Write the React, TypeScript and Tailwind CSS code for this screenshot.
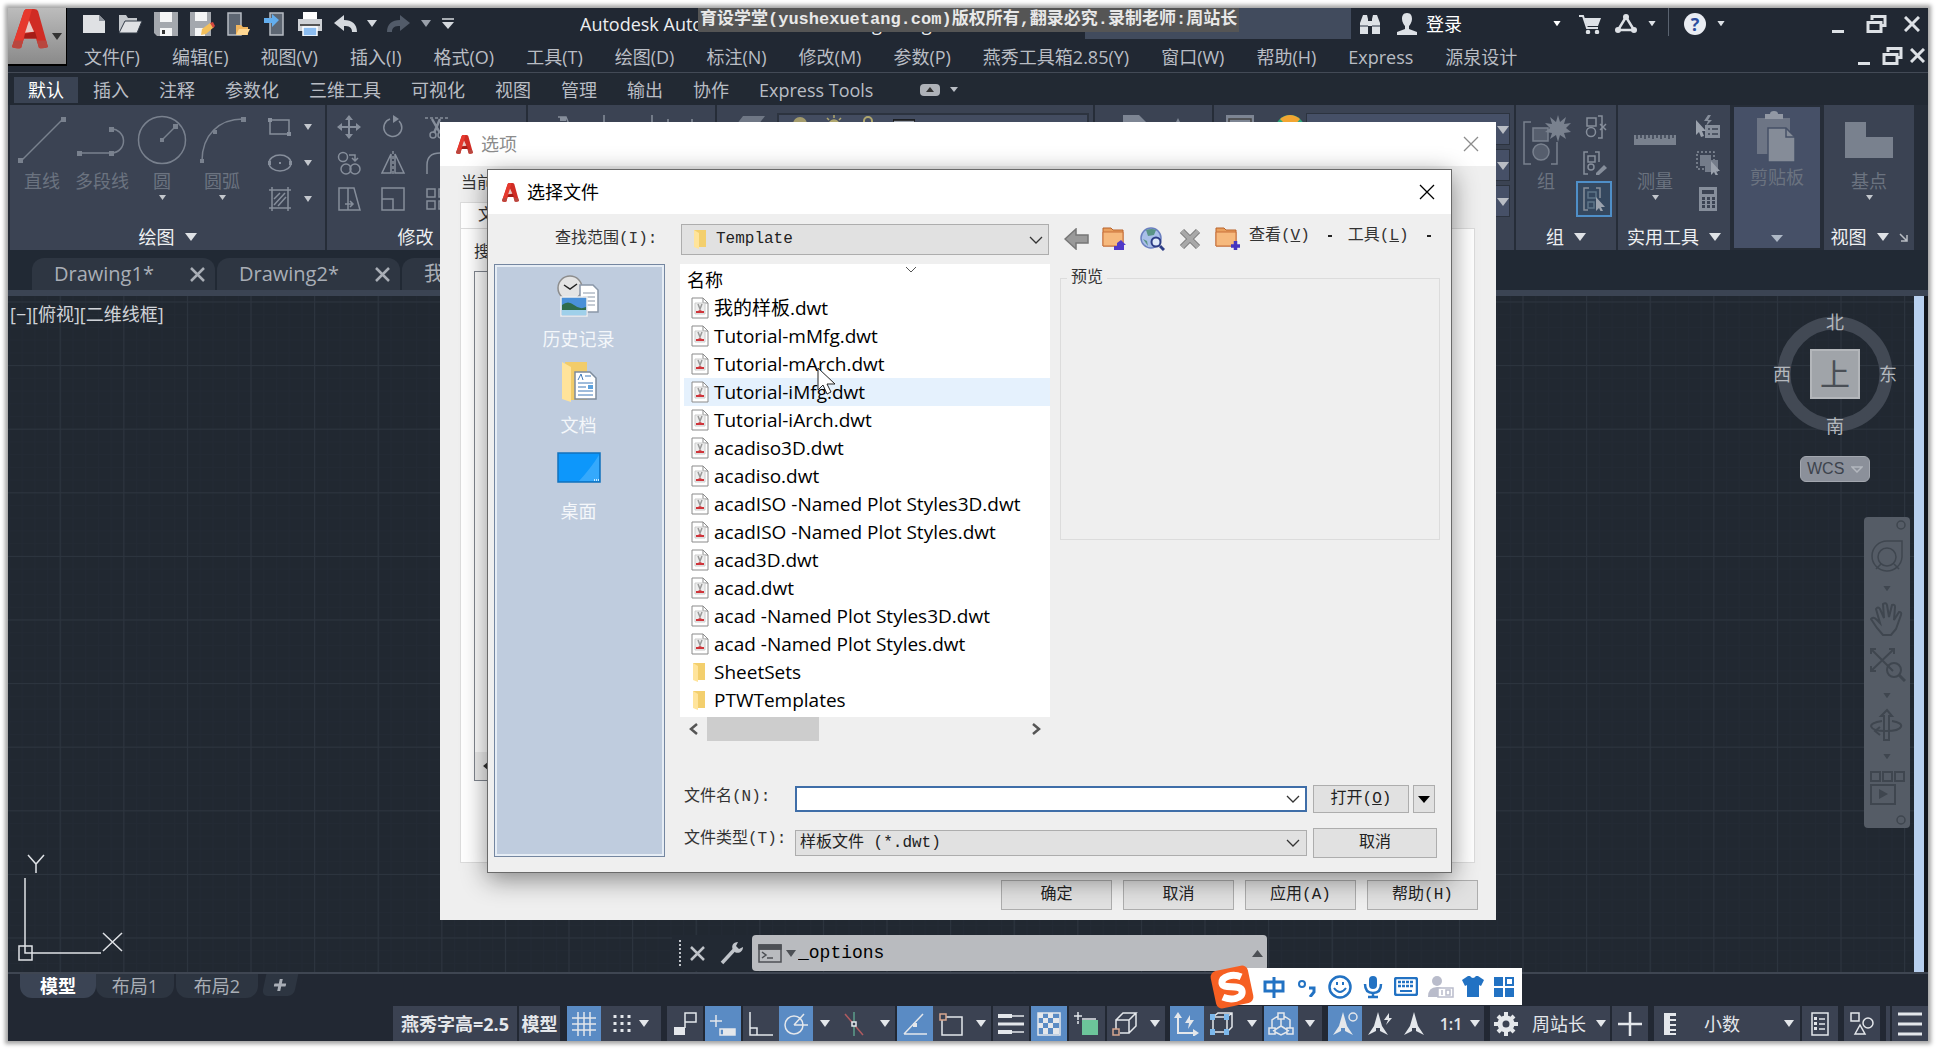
import type { ReactNode } from "react";

const MENUS = [
  "文件(F)", "编辑(E)", "视图(V)", "插入(I)", "格式(O)", "工具(T)", "绘图(D)", "标注(N)",
  "修改(M)", "参数(P)", "燕秀工具箱2.85(Y)", "窗口(W)", "帮助(H)", "Express", "源泉设计",
];

const TABS = ["默认", "插入", "注释", "参数化", "三维工具", "可视化", "视图", "管理", "输出", "协作", "Express Tools"];

const FILES = [
  "我的样板.dwt",
  "Tutorial-mMfg.dwt",
  "Tutorial-mArch.dwt",
  "Tutorial-iMfg.dwt",
  "Tutorial-iArch.dwt",
  "acadiso3D.dwt",
  "acadiso.dwt",
  "acadISO -Named Plot Styles3D.dwt",
  "acadISO -Named Plot Styles.dwt",
  "acad3D.dwt",
  "acad.dwt",
  "acad -Named Plot Styles3D.dwt",
  "acad -Named Plot Styles.dwt",
  "SheetSets",
  "PTWTemplates",
];

const HOVERED = "Tutorial-iMfg.dwt";

type IconProps = { w: number; h?: number; className?: string; children: ReactNode };

function Icon({ w, h = w, className = "", children }: IconProps) {
  return (
    <svg width={w} height={h} viewBox={`0 0 ${w} ${h}`} fill="none" stroke="currentColor" strokeWidth="1.5" className={`shrink-0 ${className}`} aria-hidden="true">
      {children}
    </svg>
  );
}

function Caret({ className = "" }: { className?: string }) {
  return (
    <Icon w={10} h={7} className={className}>
      <path d="M0 0h10L5 7z" fill="currentColor" stroke="none" />
    </Icon>
  );
}

function Chevron({ className = "" }: { className?: string }) {
  return (
    <Icon w={14} h={8} className={className}>
      <path d="M1 1l6 6 6-6" strokeWidth="1.3" />
    </Icon>
  );
}

function CloseX({ size = 16, thick = 1.3 }: { size?: number; thick?: number }) {
  return (
    <Icon w={size}>
      <path d={`M1 1L${size - 1} ${size - 1}M${size - 1} 1L1 ${size - 1}`} strokeWidth={thick} />
    </Icon>
  );
}

function LogoA({ w, h }: { w: number; h: number }) {
  return (
    <svg width={w} height={h} viewBox="0 0 36 42" preserveAspectRatio="none" className="shrink-0" aria-hidden="true">
      <path d="M12 2Q13 0 15 0h7q3 0 4 2l10 38q-5 2-9 1l-3-10H12L9 41q-5 1-9-1z" fill="#d02c24" />
      <path d="M12 2Q13 0 15 0h5L9 41q-5 1-9-1z" fill="#e6392e" />
      <path d="M17 12l5 12-9 1z" fill="#e9c9c4" />
      <path d="M13 26l10-2 2 7H12z" fill="#a51d17" />
      <path d="M2 33L0 40q4 2 9 1l2-8zM25 33l2 8q4 1 9-1l-2-7z" fill="#b8473f" />
    </svg>
  );
}

function ToolButton({ label, className = "", children }: { label: string; className?: string; children: ReactNode }) {
  return (
    <button aria-label={label} className={`flex items-center justify-center ${className}`}>
      {children}
    </button>
  );
}

function Restore() {
  return (
    <Icon w={21} h={18}>
      <path d="M6 5V1.5h13v9h-4M2 7.5h13v9H2z" strokeWidth="3" />
    </Icon>
  );
}

function QuickAccess() {
  return (
    <div className="ml-[9px] flex text-[#d5d9de]">
      <ToolButton label="新建" className="w-9">
        <Icon w={24} h={20}><path d="M1 1h16l6 6v12H1z" fill="#dfe1e4" stroke="none" /><path d="M17 1v6h6z" fill="#8d939c" stroke="none" /></Icon>
      </ToolButton>
      <ToolButton label="打开" className="w-9">
        <Icon w={25} h={20}><path d="M1 19V1h7l2 3h9v4" fill="#c3c7cc" stroke="none" /><path d="M7 7h17l-5 12H1z" fill="#dfe1e4" stroke="#333b47" strokeWidth="1" /></Icon>
      </ToolButton>
      <ToolButton label="保存" className="w-9">
        <Icon w={24}><path d="M0 0h24v24H3l-3-3z" fill="#a4a8ae" stroke="none" /><path d="M6 0h12v10H6zM6 16h12v8H6z" fill="#f4f5f6" stroke="none" /><path d="M8 18h3v4H8z" fill="#333" stroke="none" /></Icon>
      </ToolButton>
      <ToolButton label="另存为" className="w-9">
        <Icon w={25} h={24}><path d="M0 0h21v24H0z" fill="#a4a8ae" stroke="none" /><path d="M5 0h12v9H5zM5 16h10v8H5z" fill="#f4f5f6" stroke="none" /><path d="M11 23l1-6 8-6 4 4-8 7z" fill="#f3c05b" stroke="none" /><path d="M20 11l3-1 2 4-2 2z" fill="#d5483f" stroke="none" /></Icon>
      </ToolButton>
      <ToolButton label="从移动设备打开" className="w-9">
        <Icon w={23} h={24}><path d="M1 1h13v22H1z" fill="#5d6672" stroke="#b7bcc3" /><path d="M9 13h5l2 2h5v8H9z" fill="#f0b55e" stroke="none" /><path d="M12 17h11l-3 6H9z" fill="#ffd893" stroke="none" /></Icon>
      </ToolButton>
      <ToolButton label="保存到移动设备" className="w-9">
        <Icon w={23} h={24}><path d="M7 1h13v22H7z" fill="#5d6672" stroke="#b7bcc3" /><path d="M1 6h8V2l7 6-7 7v-4H1z" fill="#63aeee" stroke="none" /></Icon>
      </ToolButton>
      <ToolButton label="打印" className="w-9">
        <Icon w={24}><path d="M5 0h14v8H5z" fill="#fff" stroke="none" /><path d="M0 7h24v12H0z" fill="#cfd2d6" stroke="none" /><path d="M2 12h20v2H2z" fill="#555" stroke="none" /><path d="M5 15h14v9H5z" fill="#8cbdf0" stroke="#fff" /></Icon>
      </ToolButton>
      <ToolButton label="放弃" className="w-9">
        <Icon w={24} h={17}><path d="M0 8l10-8v5c8 0 13 4 13 12h-5c0-5-3-6-8-6v5z" fill="currentColor" stroke="none" /></Icon>
      </ToolButton>
      <ToolButton label="放弃列表" className="w-4"><Caret /></ToolButton>
      <ToolButton label="重做" className="w-9">
        <Icon w={24} h={17} className="text-[#525b69]"><path d="M24 8L14 0v5C6 5 1 9 1 17h5c0-5 3-6 8-6v5z" fill="currentColor" stroke="none" /></Icon>
      </ToolButton>
      <ToolButton label="重做列表" className="w-5"><Caret className="text-[#9aa0aa]" /></ToolButton>
      <ToolButton label="自定义快速访问工具栏" className="w-6">
        <Icon w={12} h={12}><path d="M0 1h12" /><path d="M0 4h12l-6 7z" fill="currentColor" stroke="none" /></Icon>
      </ToolButton>
    </div>
  );
}

function TitleArea() {
  return (
    <header className="flex h-[65px] border-b border-[#434a56] bg-[#212833]">
      <button aria-label="应用程序菜单" className="flex h-[58px] w-[59px] shrink-0 items-start gap-1 border-b-2 border-r border-black bg-linear-to-b from-[#bcbcbc] to-[#8a8a8a] pl-1 pt-px">
        <LogoA w={36} h={40} />
        <Caret className="mt-6 text-[#333]" />
      </button>
      <div className="flex min-w-0 flex-1 flex-col">
        <div className="flex h-[31px] items-stretch">
          <QuickAccess />
          <h1 className="ml-[120px] flex-1 self-center overflow-hidden whitespace-nowrap text-lg text-[#eceef0]">
            Autodesk AutoCAD 2020 — Drawing1.dwg
          </h1>
          <input aria-label="搜索" className="w-[266px] bg-[#414b5d] outline-none" />
          <div className="flex text-[#dde1e6]">
            <ToolButton label="查找" className="ml-px w-9">
              <Icon w={22} h={20}><path d="M1 20V9l3-8h4l1 4v15zM13 20V5l1-4h4l3 8v11zM9 7h4v5H9z" fill="currentColor" stroke="none" /><path d="M1 12h8M13 12h8" stroke="#666e7b" /></Icon>
            </ToolButton>
            <button className="flex w-[180px] items-center gap-2 pl-2 pr-[6px] text-lg text-white">
              <Icon w={22} className="text-[#dde1e6]"><path d="M11 0c4 0 5 3 5 6s-2 6-3 7v3l8 3v3H1v-3l8-3v-3C8 12 6 9 6 6s1-6 5-6z" fill="currentColor" stroke="none" /></Icon>
              <span className="flex-1 text-left">登录</span>
              <Caret className="scale-75" />
            </button>
            <ToolButton label="应用商店" className="ml-1 w-9">
              <Icon w={22} h={20}><path d="M0 2h4l4 12h11" strokeWidth="2" /><path d="M5 4h17l-3 8H8z" fill="currentColor" stroke="none" /><circle cx="9" cy="18" r="1.5" fill="currentColor" /><circle cx="18" cy="18" r="1.5" fill="currentColor" /></Icon>
            </ToolButton>
            <ToolButton label="保持连接" className="w-9">
              <Icon w={22} h={20}><path d="M11 3L3 16h16z" strokeWidth="2.5" /><circle cx="11" cy="3" r="3" fill="currentColor" stroke="none" /><circle cx="3" cy="16" r="3" fill="currentColor" stroke="none" /><circle cx="19" cy="16" r="3" fill="currentColor" stroke="none" /></Icon>
            </ToolButton>
            <ToolButton label="保持连接列表" className="w-4"><Caret className="scale-75" /></ToolButton>
            <span className="ml-2 h-7 w-px bg-[#5a6370]" />
            <ToolButton label="帮助" className="ml-2 w-9">
              <span className="flex size-[22px] items-center justify-center rounded-full bg-[#e9ecf2] text-lg font-bold text-[#2c4d9e]">?</span>
            </ToolButton>
            <ToolButton label="帮助列表" className="w-4"><Caret className="scale-75" /></ToolButton>
            <span className="w-[90px]" />
            <ToolButton label="最小化" className="w-[38px]"><span className="mt-4 h-[3px] w-3 bg-current" /></ToolButton>
            <ToolButton label="还原" className="w-[38px]"><Restore /></ToolButton>
            <ToolButton label="关闭" className="w-[33px]"><CloseX size={16} thick={3} /></ToolButton>
          </div>
        </div>
        <div className="flex flex-1 items-stretch text-[#dde1e6]">
          <nav className="flex flex-1 items-center gap-8 whitespace-nowrap pl-[17px] pt-[3px] text-lg text-[#b9bdc4]">
            {MENUS.map((m) => (
              <button key={m}>{m}</button>
            ))}
          </nav>
          <ToolButton label="最小化图形" className="w-7"><span className="mt-4 h-[3px] w-3 bg-current" /></ToolButton>
          <ToolButton label="还原图形" className="w-7"><Restore /></ToolButton>
          <ToolButton label="关闭图形" className="w-[22px]"><CloseX size={15} thick={3} /></ToolButton>
        </div>
      </div>
    </header>
  );
}

function RibbonTabs() {
  return (
    <div className="flex h-8 items-center bg-[#222933] pl-[6px] pt-px text-lg text-[#b9bdc4]">
      {TABS.map((t, i) => (
        <button key={t} className={i === 0 ? "h-[26px] bg-[#3a4353] px-[14px] leading-[26px] text-white" : "h-[26px] px-[15px] leading-[26px]"}>
          {t}
        </button>
      ))}
      <button aria-label="最小化功能区" className="ml-8 flex items-center gap-[10px]">
        <span className="flex h-3 w-5 items-center justify-center rounded-sm bg-[#aeb2b8] text-[#333]">
          <Icon w={8} h={5}><path d="M0 5h8L4 0z" fill="currentColor" stroke="none" /></Icon>
        </span>
        <Icon w={8} h={5}><path d="M0 0h8L4 5z" fill="currentColor" stroke="none" /></Icon>
      </button>
    </div>
  );
}

type PanelProps = { title: string; className: string; arrow?: boolean; corner?: boolean; children?: ReactNode };

function Panel({ title, className, arrow = true, corner, children }: PanelProps) {
  return (
    <section className={`flex flex-col bg-[#3b4353] ${className}`}>
      <div className="flex flex-1 pt-2">{children}</div>
      <div className="flex h-[26px] items-center justify-center gap-[10px] whitespace-nowrap text-lg text-[#eef0f2]">
        {title}
        {arrow && <Icon w={12} h={8} className="text-[#dfe2e6]"><path d="M0 0h12L6 8z" fill="currentColor" stroke="none" /></Icon>}
        {corner && <Corner />}
      </div>
    </section>
  );
}

function Corner() {
  return (
    <Icon w={9} className="text-[#b9bdc4]"><path d="M1 1l7 7M8 2v6H2" /></Icon>
  );
}

function BigTool({ label, className = "w-[60px]", arrow, children }: { label: string; className?: string; arrow?: boolean; children: ReactNode }) {
  return (
    <button className={`flex flex-col items-center text-[#79818e] ${className}`}>
      <span className="flex h-[54px] items-center">{children}</span>
      <span className="whitespace-nowrap text-lg leading-[28px] text-[#6b7380]">{label}</span>
      {arrow && <Icon w={7} h={5} className="text-[#c3c7cd]"><path d="M0 0h7L3.500 5z" fill="currentColor" stroke="none" /></Icon>}
    </button>
  );
}

const SMALL: Record<string, ReactNode> = {
  矩形: <><path d="M2 5h19v14H2z" /><path d="M0 3h4v4H0zM19 17h4v4h-4z" fill="currentColor" stroke="none" /></>,
  椭圆: <><ellipse cx="12" cy="12" rx="11" ry="8" /><path d="M11 11h2v2h-2zM0 10h3v4H0zM21 10h3v4h-3z" fill="currentColor" stroke="none" /></>,
  填充: <><path d="M1 3h22M1 21h22M4 0v24M20 0v24" /><path d="M6 12l6-6M6 18L17 6M10 19l8-9" /></>,
  移动: <><path d="M12 1v22M1 12h22" strokeWidth="2" /><path d="M12 0l4 5H8zM12 24l4-5H8zM0 12l5-4v8zM24 12l-5-4v8z" fill="currentColor" stroke="none" /></>,
  旋转: <><path d="M9 4a9 9 0 1 0 9 2" /><path d="M12 0l6 4-6 4z" fill="currentColor" stroke="none" /></>,
  修剪: <><path d="M0 3h24" strokeDasharray="3 2" /><path d="M7 4l8 14M15 4L9 18" strokeWidth="2.500" /><circle cx="8" cy="20" r="3" /><circle cx="16" cy="20" r="3" /></>,
  复制: <><circle cx="6" cy="6" r="4.500" /><circle cx="9" cy="18" r="5" /><circle cx="18" cy="18" r="5" /><path d="M12 4h6v5M15 7l3 3 3-3" /></>,
  镜像: <><path d="M10 3v19H1zM14 3v19h9z" /><path d="M12 0v24" strokeDasharray="3 2" /></>,
  圆角: <path d="M2 23V14Q2 2 15 2h8" />,
  拉伸: <><path d="M2 1h9v22H2zM11 1h6l6 22H11" /><path d="M8 17h8M13 14l3 3-3 3" /></>,
  缩放: <><path d="M1 1h22v22H1zM1 12h11v11" /></>,
  阵列: <path d="M2 2h8v8H2zM14 2h8v8h-8zM2 14h8v8H2zM14 14h8v8h-8z" />,
  解除编组: <><path d="M6 3h9v8H6zM17 1h4v22h-4M19 9l6 6M25 9l-6 6" /><circle cx="10" cy="17" r="4.500" /></>,
  组编辑: <><path d="M7 1H3v22h4M14 1h4v10M7 5h7v6H7z" /><circle cx="10" cy="16" r="3" /><path d="M15 22l8-8 3 3-8 7h-3z" fill="currentColor" stroke="none" /></>,
  组选择: <><path d="M8 1H3v22h4M15 1h4v10" /><path d="M7 5h8v6H7zM7 15h6v6H7z" stroke="#5d7488" /><path d="M15 10v14l3-3 2 4 2-1-2-4h4z" fill="#9ba2ad" stroke="none" /></>,
  快速选择: <><path d="M9 10h15v13H9z" fill="currentColor" stroke="none" /><path d="M12 14h2M16 14h6M12 19h2M16 19h6" stroke="#3b4353" /><path d="M0 5v15l3-3 2 5 3-1-2-5h4z" fill="#9ba2ad" stroke="none" /><path d="M12 0l-4 6h4l-2 5 6-6h-4l3-5z" fill="currentColor" stroke="none" /></>,
  全部选择: <><path d="M1 1h17v17H1z" strokeDasharray="2 2" /><path d="M4 4h11v11H4zM9 9h13v12H9z" fill="#747c8a" stroke="none" /><path d="M15 10v14l3-3 2 4 2-1-2-4h4z" fill="#9ba2ad" stroke="none" /></>,
  计算器: <><path d="M3 0h18v24H3z" fill="currentColor" stroke="none" /><path d="M6 3h12v4H6zM6 10h3v3H6zM11 10h3v3h-3zM16 10h3v3h-3zM6 14h3v3H6zM11 14h3v3h-3zM16 14h3v3h-3zM6 18h3v3H6zM11 18h3v3h-3zM16 18h3v3h-3z" fill="#3b4353" stroke="none" /></>,
};

function SmallTool({ name, arrow, active, className = "" }: { name: string; arrow?: boolean; active?: boolean; className?: string }) {
  return (
    <button aria-label={name} className={`flex h-9 items-center gap-[10px] text-[#868e9b] ${active ? "border-2 border-[#4f8fc8] bg-[#35485f]" : ""} ${className}`}>
      <Icon w={26} h={24}>{SMALL[name]}</Icon>
      {arrow && <Icon w={8} h={6} className="text-[#c3c7cd]"><path d="M0 0h8L4 6z" fill="currentColor" stroke="none" /></Icon>}
    </button>
  );
}

function PropertySelect({ label, value }: { label: string; value: string }) {
  return (
    <div className="relative h-8 border border-[#2c333f] bg-[#465067]">
      <select aria-label={label} className="h-full w-full appearance-none pl-4 text-lg text-[#9aa1ac] outline-none">
        <option>{value}</option>
      </select>
      <Icon w={12} h={8} className="pointer-events-none absolute right-0 top-3 text-[#b9bdc4]"><path d="M0 0h12L6 8z" fill="currentColor" stroke="none" /></Icon>
    </div>
  );
}

function Ribbon() {
  return (
    <div className="flex h-[145px] gap-[2px] bg-[#262d38] pl-[2px] pr-[14px]">
      <Panel title="绘图" className="w-[315px] shrink-0">
        <div className="flex pl-[2px]">
          <BigTool label="直线"><Icon w={50}><path d="M4 46L46 4" /><path d="M1 43h5v5H1zM44 2h5v5h-5z" fill="currentColor" stroke="none" /></Icon></BigTool>
          <BigTool label="多段线"><Icon w={50}><path d="M3 38h32a12 12 0 0 0-1-24" /><path d="M0 36h5v5H0zM32 36h5v5h-5zM32 12h5v5h-5z" fill="currentColor" stroke="none" /></Icon></BigTool>
          <BigTool label="圆" arrow><Icon w={50}><circle cx="25" cy="25" r="23.500" /><path d="M25 25l13-13" /><path d="M23 23h4v4h-4zM36 9h5v5h-5z" fill="currentColor" stroke="none" /></Icon></BigTool>
          <BigTool label="圆弧" arrow><Icon w={50}><path d="M5 46C5 20 22 4 46 4" /><path d="M3 44h4v4H3zM44 2h5v5h-5zM16 15h4v4h-4z" fill="currentColor" stroke="none" /></Icon></BigTool>
          <div className="ml-4 -mt-1 flex flex-col">
            <SmallTool name="矩形" arrow />
            <SmallTool name="椭圆" arrow />
            <SmallTool name="填充" arrow />
          </div>
        </div>
      </Panel>
      <Panel title="修改" className="w-[199px] shrink-0">
        <div className="-mt-1 grid auto-rows-[36px] grid-cols-3 gap-x-[18px] pl-[10px]">
          {["移动", "旋转", "修剪", "复制", "镜像", "圆角", "拉伸", "缩放", "阵列"].map((n) => (
            <SmallTool key={n} name={n} />
          ))}
        </div>
      </Panel>
      <Panel title="注释" className="w-[187px] shrink-0">
        <Icon w={180} h={30} className="text-[#868e9b]"><path d="M30 4h8l10 24M76 2v26M124 2v26M140 6v14M164 6v14" /><path d="M32 4h6v4h-6z" fill="currentColor" stroke="none" /></Icon>
      </Panel>
      <Panel title="图层" className="w-[376px] shrink-0">
        <Icon w={60} h={40} className="text-[#6f7785]"><path d="M26 3h22L38 16H16zM16 20h22v4H16z" fill="currentColor" stroke="none" /></Icon>
        <div className="mr-1 flex h-8 flex-1 items-start gap-4 border-2 border-[#2c333f] bg-[#434c60] pl-3">
          <Icon w={18}><circle cx="9" cy="9" r="7" fill="#a39b6c" stroke="none" /></Icon>
          <Icon w={18} className="text-[#b0a76f]"><circle cx="9" cy="10" r="5" fill="currentColor" /><path d="M9 0v3M2 3l2 2M16 3l-2 2" /></Icon>
          <Icon w={18} className="text-[#b0a76f]"><path d="M5 12V6a4 4 0 0 1 8 0v6M3 12h12v5H3z" strokeWidth="2" /></Icon>
          <Icon w={22} h={18}><path d="M0 5h22v11H0z" fill="#9ba2ad" stroke="#111" /></Icon>
        </div>
      </Panel>
      <Panel title="块" className="w-[117px] shrink-0">
        <Icon w={100} h={40} className="text-[#7d8593]"><path d="M28 2h16l10 10v26H28z" fill="currentColor" stroke="none" /><path d="M83 5l3 6 6-2-3 6 4 4H73l4-4-3-6 6 2z" fill="currentColor" stroke="none" /></Icon>
      </Panel>
      <Panel title="特性" className="min-w-0 flex-1" corner>
        <Icon w={92} h={48} className="text-[#9aa0aa]"><path d="M12 2h28v30H12z" fill="#7d8593" stroke="none" /><path d="M15 6h22v20H15z" stroke="#444" /><circle cx="76" cy="17" r="15" fill="#2fa87c" stroke="none" /><path d="M66 6q10-8 20 0l-9 11z" fill="#f2a531" stroke="none" /></Icon>
        <div className="flex flex-1 flex-col gap-1 pr-1">
          <PropertySelect label="颜色" value="ByLayer" />
          <PropertySelect label="线宽" value="ByLayer" />
          <PropertySelect label="线型" value="ByLayer" />
        </div>
      </Panel>
      <Panel title="组" className="w-[100px] shrink-0">
        <BigTool label="组" className="w-[60px]">
          <Icon w={50}><path d="M10 7H3v42h7M30 49h6V27" /><path d="M12 13h15v13H12z" fill="#565e6d" /><circle cx="20" cy="37" r="8" fill="#565e6d" /><path d="M37 0l2 7 6-5-2 7 7-1-5 5 5 4-7 1 2 6-6-4-2 7-2-7-6 4 2-6-7-1 5-4-5-5 7 1-2-7 6 5z" fill="currentColor" stroke="none" /></Icon>
        </BigTool>
        <div className="-mt-1 flex flex-col">
          <SmallTool name="解除编组" className="w-9 justify-center" />
          <SmallTool name="组编辑" className="w-9 justify-center" />
          <SmallTool name="组选择" active className="w-9 justify-center" />
        </div>
      </Panel>
      <Panel title="实用工具" className="w-[112px] shrink-0">
        <BigTool label="测量" arrow className="w-[74px]">
          <Icon w={42} h={12}><path d="M0 1h42v10H0z" fill="currentColor" stroke="none" /><path d="M3 1v4M7 1v3M11 1v4M15 1v3M19 1v4M23 1v3M27 1v4M31 1v3M35 1v4M39 1v3" stroke="#3b4353" /></Icon>
        </BigTool>
        <div className="-mt-1 flex flex-col pl-1">
          <SmallTool name="快速选择" />
          <SmallTool name="全部选择" />
          <SmallTool name="计算器" />
        </div>
      </Panel>
      <div className="mx-[2px] my-[2px] flex w-[86px] shrink-0 flex-col items-center bg-[#465067] text-[#6b7380]">
        <Icon w={42} h={52} className="mt-1"><path d="M1 7h33v36H1z" fill="#6d7585" stroke="none" /><path d="M9 3h5a4 3 0 0 1 8 0h5v5H9z" fill="#9298a4" stroke="none" /><path d="M12 17h18l9 9v25H12z" fill="#858c98" stroke="#465067" /><path d="M30 17v9h9" stroke="#465067" /></Icon>
        <span className="text-lg leading-[28px]">剪贴板</span>
        <Icon w={12} h={7} className="mb-[6px] mt-auto text-[#aeb8c6]"><path d="M0 0h12L6 7z" fill="currentColor" stroke="none" /></Icon>
      </div>
      <Panel title="视图" className="w-[90px] shrink-0" corner>
        <BigTool label="基点" arrow className="w-full">
          <Icon w={48} h={36}><path d="M0 0h21v15h27v21H0z" fill="currentColor" stroke="none" /></Icon>
        </BigTool>
      </Panel>
    </div>
  );
}

function FileTabs() {
  return (
    <div className="flex h-[46px] items-end border-b-[6px] border-[#3b4453] bg-[#212934] pl-6 text-xl text-[#a9aeb6]">
      {["Drawing1*", "Drawing2*", "我的样板*"].map((t) => (
        <div key={t} className="mr-[2px] flex h-8 w-[183px] items-center justify-between rounded-t-xl bg-[#2e3642] pl-[22px] pr-[10px]">
          <span>{t}</span>
          <ToolButton label={`关闭 ${t}`}><CloseX size={15} thick={2.5} /></ToolButton>
        </div>
      ))}
    </div>
  );
}

function ViewCube() {
  return (
    <div className="absolute right-[7px] top-5 flex w-[144px] flex-col items-center text-lg text-[#b4b8be]">
      <div className="relative flex h-[116px] w-[116px] items-center justify-center">
        <Icon w={116} className="absolute left-0 top-0 text-[#424954]"><circle cx="58" cy="58" r="51" strokeWidth="13" /></Icon>
        <div className="absolute inset-0 flex flex-col items-center justify-between">
          <span className="-mt-1 leading-5">北</span>
          <span className="-mb-1 leading-5">南</span>
        </div>
        <div className="absolute -inset-x-1 inset-y-0 flex items-center justify-between">
          <span>西</span>
          <span>东</span>
        </div>
        <button className="relative size-[50px] border-2 border-[#b3b6ba] bg-[#a0a4a9] text-3xl text-[#4a4f56]">上</button>
      </div>
      <button className="mt-6 flex h-[26px] w-[70px] items-center justify-between rounded-md border border-[#a3a7af] bg-[#8b909a] px-[6px] font-[Liberation_Sans] text-base text-[#3d434d]">
        WCS
        <Icon w={12} h={7} className="text-[#b3b7be]"><path d="M1 1h10L6 6z" /></Icon>
      </button>
    </div>
  );
}

function NavBar() {
  return (
    <div className="absolute right-1 top-[221px] flex h-[311px] w-[46px] flex-col items-center justify-between rounded-sm bg-[#555c66] py-[3px] text-[#3f464f]">
      <Icon w={10} className="mr-1 self-end"><circle cx="5" cy="5" r="4" /></Icon>
      <ToolButton label="控制盘"><Icon w={36}><path d="M18 2h15v16a15 15 0 1 1-15-16z" /><circle cx="18" cy="18" r="9" /><path d="M12 25l-5 5M25 25l5 5" /></Icon></ToolButton>
      <Caret className="scale-75" />
      <ToolButton label="平移"><Icon w={36}><path d="M8 27L2 18q2-3 6 1l3 3-4-14q2-3 4 0l4 9-1-14q3-2 4 1l2 12 3-12q3-1 3 2l-1 13 5-8q3 0 2 3l-5 14-5 6H14z" strokeWidth="2" /></Icon></ToolButton>
      <ToolButton label="缩放"><Icon w={38} h={36}><path d="M3 3l22 22M26 3L3 25M3 8V3h5M21 3h5v5M3 20v5h5" strokeWidth="2" /><circle cx="26" cy="24" r="7" strokeWidth="2" /><path d="M31 29l6 6" strokeWidth="3" /></Icon></ToolButton>
      <Caret className="scale-75" />
      <ToolButton label="动态观察"><Icon w={36}><path d="M15 32V8h-3l6-6 5 6h-3v24z" strokeWidth="2" /><path d="M13 13c-16 2-14 10 4 10s20-8 6-10M11 19l-5 4 5 4" strokeWidth="2" /></Icon></ToolButton>
      <Caret className="scale-75" />
      <ToolButton label="ShowMotion"><Icon w={36}><path d="M2 2h9v9H2zM14 2h9v9h-9zM26 2h9v9h-9zM2 15h24v19H2z" strokeWidth="2" /><path d="M10 19v10l9-5z" fill="currentColor" stroke="none" /></Icon></ToolButton>
      <Icon w={10} className="mr-1 self-end"><circle cx="5" cy="5" r="4" /></Icon>
    </div>
  );
}

function DrawingArea() {
  return (
    <main className="relative flex flex-1 bg-[#212831]">
      <div className="relative flex flex-1 flex-col">
        <svg className="absolute inset-0 h-full w-full" aria-hidden="true">
          <defs>
            <pattern id="minor" width="12.720" height="12.720" patternUnits="userSpaceOnUse" x="51.700" y="5.500">
              <path d="M0 .5h13M.5 0v13" stroke="#232a34" fill="none" />
            </pattern>
            <pattern id="major" width="63.600" height="63.600" patternUnits="userSpaceOnUse" x="51.700" y="5.500">
              <path d="M0 .5h64M.5 0v64" stroke="#2d353f" fill="none" />
            </pattern>
          </defs>
          <rect width="100%" height="100%" fill="url(#minor)" />
          <rect width="100%" height="100%" fill="url(#major)" />
        </svg>
        <p className="relative pl-[2px] pt-1 text-lg text-[#d0d3d8]">[−][俯视][二维线框]</p>
        <Icon w={116} h={110} className="relative ml-[10px] mt-auto mb-2 text-[#dfe2e6]">
          <path d="M7 24v75h76M1 92h13v14H1z" />
          <path d="M10 1l8 9 8-9M18 10v9M85 79l19 18M104 79L85 97" />
        </Icon>
        <ViewCube />
        <div className="absolute bottom-px left-[664px] flex h-9 items-center bg-[#222933] text-[#c0c4ca]">
          <Icon w={10} h={26} className="ml-1"><path d="M4 0v26" strokeDasharray="2 2" strokeWidth="2" /></Icon>
          <ToolButton label="关闭命令行" className="ml-1"><CloseX size={15} thick={2.5} /></ToolButton>
          <ToolButton label="自定义" className="ml-[15px]">
            <Icon w={24}><path d="M2 22L14 9" strokeWidth="3.500" /><path d="M23 6l-4 2-3-3 2-4c-5 0-7 4-5 8 3 5 10 3 10-3z" fill="currentColor" stroke="none" /></Icon>
          </ToolButton>
          <div className="ml-2 flex h-9 w-[515px] items-center rounded-sm bg-[#b9bbbf] pl-[6px] pr-1 text-[#4d5055]">
            <Icon w={24} h={19}><path d="M1 1h22v17H1zM1 5h22M4 8l4 3-4 3M9 14h6" /><path d="M1 1h22v4H1z" fill="currentColor" /></Icon>
            <Caret className="ml-1" />
            <input aria-label="命令" defaultValue="_options" className="min-w-0 flex-1 pl-[2px] font-[Liberation_Mono,Noto_Sans_CJK_SC,monospace] text-lg text-black outline-none" />
            <Icon w={11} h={7}><path d="M0 7h11L5.500 0z" fill="currentColor" stroke="none" /></Icon>
          </div>
        </div>
        <NavBar />
      </div>
      <div className="w-[10px] bg-[#b8d0ef]" />
      <div className="w-1 bg-[#12161c]" />
    </main>
  );
}

function LayoutTabs() {
  return (
    <div className="flex h-[34px] items-start border-t-2 border-[#3f4652] pl-3 text-lg leading-[24px] text-[#a9aeb6]">
      <button className="h-6 w-[76px] rounded-b-xl bg-[#3b4454] font-bold text-white">模型</button>
      <button className="h-6 w-[78px] rounded-b-xl bg-[#2d3541]">布局1</button>
      <button className="ml-[2px] h-6 w-[82px] rounded-b-xl bg-[#2d3541]">布局2</button>
      <button aria-label="新建布局" className="ml-[6px] flex h-[22px] w-8 -skew-x-12 items-center justify-center rounded-b-md bg-[#2d3541]">
        <Icon w={12}><path d="M6 0v12M0 6h12" strokeWidth="3" /></Icon>
      </button>
    </div>
  );
}

function StatusButton({ label, on, bare, className = "w-9", children }: { label: string; on?: boolean; bare?: boolean; className?: string; children: ReactNode }) {
  return (
    <button aria-label={label} className={`flex h-full shrink-0 items-center justify-center gap-2 whitespace-nowrap ${on ? "bg-[#5a8bc4]" : "bg-[#3b4252]"} ${bare ? "" : "ml-[2px]"} ${className}`}>
      {children}
    </button>
  );
}

function StatusBar() {
  return (
    <footer className="flex h-[35px] items-stretch justify-end text-lg text-[#e4e7eb]">
      <StatusButton label="燕秀字高" className="w-[124px] font-bold">燕秀字高=2.5</StatusButton>
      <StatusButton label="模型空间" className="ml-2 w-[41px] font-bold">模型</StatusButton>
      <StatusButton label="栅格" on className="ml-[7px] w-[34px]"><Icon w={24}><path d="M0 6h24M0 12h24M0 18h24M6 0v24M12 0v24M18 0v24" /></Icon></StatusButton>
      <StatusButton label="捕捉模式" bare className="w-[60px] justify-between pl-2 pr-[9px]">
        <Icon w={18}><path d="M2 0v18M9 0v18M16 0v18" strokeWidth="3" strokeDasharray="3 4" /></Icon>
        <Caret />
      </StatusButton>
      <StatusButton label="推断约束" className="ml-[6px] w-9"><Icon w={24}><path d="M12 10V1h11v9H12v6" /><path d="M1 15h11v8H1z" fill="currentColor" stroke="none" /></Icon></StatusButton>
      <StatusButton label="动态输入" on><Icon w={26} h={24}><path d="M0 9h12M6 3v12M10 17h15v6H10z" /><path d="M13 17h12v6H13z" fill="currentColor" stroke="none" /></Icon></StatusButton>
      <StatusButton label="正交"><Icon w={24}><path d="M1 0v23h23M1 16h7v7" /></Icon></StatusButton>
      <StatusButton label="极轴追踪" on bare className="w-[34px]"><Icon w={26} h={24}><circle cx="11" cy="13" r="9" /><path d="M11 13h14M11 13L21 2" /></Icon></StatusButton>
      <StatusButton label="极轴列表" bare className="w-6"><Caret /></StatusButton>
      <StatusButton label="等轴测草图" bare className="w-[58px] gap-3"><Icon w={26} h={24}><path d="M3 2l18 21" stroke="#b05b60" /><path d="M12 0v24" stroke="#5d9e8b" /><path d="M10 10h4v4h-4z" fill="#3b4252" /></Icon><Caret /></StatusButton>
      <StatusButton label="对象捕捉追踪" on><Icon w={24}><path d="M1 22h23M1 22L20 2" /><path d="M10 11h4v4h-4z" fill="currentColor" stroke="none" /></Icon></StatusButton>
      <StatusButton label="对象捕捉" bare className="w-[58px] gap-3"><Icon w={25} h={24}><path d="M3 5h20v18H3z" /><path d="M1 2h6v6H1z" fill="#3b4252" stroke="#d8a68e" /></Icon><Caret /></StatusButton>
      <StatusButton label="线宽"><Icon w={26} h={24}><path d="M0 4h26" /><path d="M0 12h26" strokeWidth="3" /><path d="M0 20h26" /><path d="M0 4h14M0 20h14" strokeWidth="4" /></Icon></StatusButton>
      <StatusButton label="透明度" on>
        <Icon w={24}><path d="M1 1h22v22H1z" /><path d="M1 1h5v5H1zM11 1h5v5h-5zM6 6h5v5H6zM16 6h6v5h-6zM1 11h5v5H1zM11 11h5v5h-5zM6 16h5v6H6zM16 16h6v6h-6z" fill="currentColor" stroke="none" /></Icon>
      </StatusButton>
      <StatusButton label="选择循环"><Icon w={26} h={24}><path d="M8 8h16v15H8z" fill="#6cc59a" stroke="none" /><path d="M0 4h8M4 0v8M4 12v-3M8 7h14" /></Icon></StatusButton>
      <StatusButton label="三维对象捕捉" className="w-[58px] gap-3"><Icon w={26} h={24}><path d="M4 18V8h13v13H8M4 8l7-7h13l-7 7M24 1v13l-7 7" /><path d="M1 17h6v6H1z" fill="#3b4252" stroke="#d8a68e" /></Icon><Caret /></StatusButton>
      <StatusButton label="动态 UCS" on className="ml-[5px] w-[34px]"><Icon w={26} h={24}><path d="M4 4v17h18" strokeWidth="2" /><path d="M4 0l4 6H0zM25 21l-6-4v8z" fill="currentColor" stroke="none" /><path d="M16 3l-5 8h4l-1 6 6-9h-4z" fill="currentColor" stroke="none" /></Icon></StatusButton>
      <StatusButton label="选择过滤" bare className="w-[58px] gap-3"><Icon w={26} h={24}><path d="M4 5h14v15H4zM4 5l5-4h14v14l-5 5M18 5l5-4" /><path d="M1 2h5v6H1zM15 2h5v6h-5zM1 17h5v6H1zM15 17h5v6h-5z" fill="#7cb8ec" stroke="none" /></Icon><Caret /></StatusButton>
      <StatusButton label="小控件" on className="w-[34px]"><Icon w={26} h={24}><path d="M10 1h6v6h-6zM13 7v7l-8 5M13 14l8 5M1 16h6v6H1zM19 16h6v6h-6zM10 4l-6 4v8M16 4l6 4v8M7 20l6 3 6-3" /></Icon></StatusButton>
      <StatusButton label="小控件列表" bare className="w-6"><Caret /></StatusButton>
      <StatusButton label="注释可见性" on className="ml-[6px] w-[34px]"><Icon w={26} h={24}><path d="M11 0l4 14 6 9-8-4v-3h-4v3l-8 4 6-9z" fill="currentColor" stroke="none" /><circle cx="21" cy="5" r="4" /></Icon></StatusButton>
      <StatusButton label="自动缩放" bare><Icon w={26} h={24}><path d="M11 0l4 14 6 9-8-4v-3h-4v3l-8 4 6-9zM22 1l-5 7h4l-2 5 6-7h-3z" fill="currentColor" stroke="none" /></Icon></StatusButton>
      <StatusButton label="注释比例" bare className="w-[86px]"><Icon w={26} h={24}><path d="M12 0l4 14 6 9-8-4v-3h-4v3l-8 4 6-9z" fill="currentColor" stroke="none" /></Icon><span className="ml-1 text-base font-semibold">1:1</span><Caret /></StatusButton>
      <StatusButton label="切换工作空间" className="ml-[6px] w-[120px] gap-[10px]">
        <Icon w={24}><circle cx="12" cy="12" r="6" strokeWidth="5" /><path d="M12 0v5M12 19v5M0 12h5M19 12h5M4 4l3 3M17 17l3 3M20 4l-3 3M7 17l-3 3" strokeWidth="4" /></Icon>
        <span className="ml-1">周站长</span>
        <Caret />
      </StatusButton>
      <StatusButton label="注释监视器"><Icon w={24}><path d="M12 0v24M0 12h24" strokeWidth="2.500" /></Icon></StatusButton>
      <StatusButton label="单位" className="ml-[6px] w-[146px] gap-0 pl-[10px] pr-[6px]">
        <Icon w={12} h={22}><path d="M0 0h12v3H6v3h6v2H6v3h6v2H6v3h6v2H6v2h6v2H0z" fill="currentColor" stroke="none" /></Icon>
        <span className="ml-5 flex-1 text-left">小数</span>
        <Caret />
      </StatusButton>
      <StatusButton label="快捷特性"><Icon w={18} h={24}><path d="M1 1h16v22H1zM8 7h6M8 12h6M8 17h6" /><path d="M3 5h3v3H3zM3 10h3v3H3zM3 15h3v3H3z" fill="currentColor" stroke="none" /></Icon></StatusButton>
      <StatusButton label="隔离对象" className="ml-[6px] w-9"><Icon w={24}><path d="M1 1h8v8H1zM5 22l5-9 5 9z" /><circle cx="18" cy="11" r="5" /></Icon></StatusButton>
      <StatusButton label="分隔" className="ml-[6px] w-1">{null}</StatusButton>
      <StatusButton label="自定义状态栏" className="ml-1 w-9"><Icon w={24}><path d="M0 2h24M0 12h24M0 22h24" strokeWidth="3" /></Icon></StatusButton>
    </footer>
  );
}

function ImeBar() {
  return (
    <div className="absolute left-[1233px] top-[968px] flex h-[37px] items-center bg-white pl-6 text-[#2272c3]">
      <div className="absolute -left-5 top-0 flex size-[38px] -rotate-12 items-center justify-center rounded-md bg-[#f65f22]">
        <Icon w={32}><path d="M27 8C20 3 8 3 7 10s18 4 18 12-13 7-20 2" stroke="#fff" strokeWidth="7" /></Icon>
      </div>
      <ToolButton label="中文" className="w-[33px]"><Icon w={22}><path d="M2 6h18v9H2zM11 1v21" strokeWidth="3" /></Icon></ToolButton>
      <ToolButton label="标点" className="w-[33px]"><Icon w={20}><circle cx="5" cy="7" r="3" strokeWidth="2" /><path d="M12 11h5v4l-4 5" strokeWidth="3" /></Icon></ToolButton>
      <ToolButton label="表情" className="w-[33px]"><Icon w={24}><circle cx="12" cy="12" r="10.500" strokeWidth="2.500" /><path d="M6 13q6 8 12 0M9 7v3M15 7v3" strokeWidth="2" /></Icon></ToolButton>
      <ToolButton label="语音" className="w-[33px]"><Icon w={20} h={24}><rect x="6" y="1" width="8" height="13" rx="4" fill="currentColor" stroke="none" /><path d="M2 9q0 9 8 9t8-9M10 18v5M5 22h10" strokeWidth="2.500" /></Icon></ToolButton>
      <ToolButton label="键盘" className="w-[33px]"><Icon w={24} h={19}><rect x="1" y="1" width="22" height="17" rx="2" strokeWidth="2.500" /><path d="M4 5h16M4 9h16" strokeWidth="2.500" strokeDasharray="3 1" /><path d="M6 14h12" strokeWidth="2" /></Icon></ToolButton>
      <ToolButton label="用户" className="w-[38px]">
        <Icon w={26} h={22} className="text-[#b9bccb]"><circle cx="9" cy="5" r="5" fill="currentColor" stroke="none" /><path d="M0 21q0-10 9-10 5 0 7 3v7z" fill="currentColor" stroke="none" /><path d="M10 12h15v9H10z" fill="#fff" /><path d="M14 14v5M18 14h4v5h-4z" /></Icon>
      </ToolButton>
      <ToolButton label="皮肤" className="w-[26px]"><Icon w={22} h={21}><path d="M6 0h2q3 4 6 0h2l6 4-3 6-2-1v12H5V9l-2 1-3-6z" fill="currentColor" stroke="none" /></Icon></ToolButton>
      <ToolButton label="工具箱" className="w-9"><Icon w={20}><path d="M0 0h9v9H0zM0 11h9v9H0zM11 11h9v9h-9z" fill="currentColor" stroke="none" /><path d="M12 1h7v7h-7z" strokeWidth="2" /></Icon></ToolButton>
    </div>
  );
}

function Folder({ w = 16, h = 20 }: { w?: number; h?: number }) {
  return (
    <svg width={w} height={h} viewBox="0 0 16 20" className="shrink-0" aria-hidden="true">
      <path d="M2 1h12v17H2z" fill="#f3cf6d" />
      <path d="M2 1l5 3v16l-5-2z" fill="#ffe49b" />
    </svg>
  );
}

function DwtIcon() {
  return (
    <Icon w={18} h={22}>
      <path d="M1 1h11l5 5v15H1z" fill="#fff" stroke="#8b8b8b" strokeWidth="1" />
      <path d="M12 1v5h5" stroke="#8b8b8b" strokeWidth="1" />
      <path d="M4 6h10v11H4z" fill="#eee" stroke="#ccc" strokeWidth="1" />
      <path d="M5 16v-2q4 0 4-2 0 2 4 2v2z" fill="#d0353b" stroke="none" />
      <path d="M7 7l2 5 2-5" stroke="#999" />
    </Icon>
  );
}

function OrangeFolder({ children }: { children: ReactNode }) {
  return (
    <Icon w={25} h={24}>
      <path d="M1 3V1h8l2 2h10v16H1z" fill="#e9a05e" stroke="#b9632b" strokeWidth="1" />
      <path d="M1 5h20v14H1z" fill="#f6b97d" stroke="#c9713a" strokeWidth="1" />
      {children}
    </Icon>
  );
}

const DIALOG_BUTTON = "border border-[#adadad] bg-[#e1e1e1] text-[#222]";

function Places() {
  return (
    <nav className="ml-[6px] flex h-[593px] w-[171px] shrink-0 flex-col items-center border border-[#7486a0] bg-[#bfccde] pr-[2px] pt-[2px] text-lg leading-6 text-[#f4f7fa] shadow-[inset_0_0_0_2px_#e6edf5]">
      <button className="flex h-[86px] flex-col items-center justify-end">
        <Icon w={46} h={42}>
          <circle cx="14" cy="13" r="12" fill="#e4e4e4" stroke="#8d8d8d" /><path d="M8 10l6 4 7-5" stroke="#222" />
          <path d="M24 10h13l5 5v22H24z" fill="#fff" stroke="#8a97a8" /><path d="M27 18h12M27 22h12M27 26h12M27 30h12" stroke="#8a97a8" strokeWidth="1" />
          <path d="M5 22h26v19H5z" fill="#4a90d8" stroke="#eee" /><path d="M6 30q6-5 12 0t12 2v3H6z" fill="#2f6b4a" stroke="none" /><path d="M6 35h24v5H6z" fill="#9fd0ea" stroke="none" />
        </Icon>
        <span className="mt-3">历史记录</span>
      </button>
      <button className="flex h-[86px] flex-col items-center justify-end">
        <Icon w={36} h={42}>
          <path d="M4 1h22v38H10z" fill="#f2cc69" stroke="none" /><path d="M1 1l9 5v35l-9-3z" fill="#ffe39a" stroke="none" />
          <path d="M14 11h15l6 6v21H14z" fill="#fff" stroke="#7d8b9c" /><path d="M17 19l3-6 2 6M24 15h6M17 22h15M17 26h8M17 30h15M17 34h15" stroke="#3f78b8" strokeWidth="1" /><path d="M27 24h5v4h-5z" fill="#5ea2dd" stroke="none" />
        </Icon>
        <span className="mt-3">文档</span>
      </button>
      <button className="flex h-[86px] flex-col items-center justify-end">
        <Icon w={44} h={31} className="mb-[6px]">
          <path d="M1 1h42v29H1z" fill="#0d97fb" stroke="#1272bd" /><path d="M22 29Q34 16 42 3v26z" fill="#35a9fc" stroke="none" /><path d="M37 28h6" stroke="#fff" strokeDasharray="1 1" />
        </Icon>
        <span className="mt-3">桌面</span>
      </button>
    </nav>
  );
}

function FileList() {
  return (
    <div className="w-[370px] shrink-0">
      <div className="relative h-[453px] bg-white font-[Open_Sans,Noto_Sans_CJK_SC,sans-serif] text-lg text-black">
        <div className="flex h-[30px] items-center pl-[7px] pt-[2px]">名称</div>
        <Icon w={12} h={7} className="absolute left-[225px] top-[2px] text-[#555]"><path d="M1 1l5 5 5-5" strokeWidth="1" /></Icon>
        <ul className="text-[19px]">
          {FILES.map((f) => (
            <li key={f} className={`ml-1 flex h-7 items-center gap-[5px] whitespace-nowrap pl-[7px] leading-7 ${f === HOVERED ? "bg-[#e5f1fd]" : ""}`}>
              {f.endsWith(".dwt") ? <DwtIcon /> : <span className="w-[18px]"><Folder /></span>}
              {f}
            </li>
          ))}
        </ul>
      </div>
      <div className="flex h-6 items-center text-[#555]">
        <ToolButton label="向左滚动" className="w-[27px]"><Icon w={9} h={12}><path d="M8 1L2 6l6 5" strokeWidth="2.500" /></Icon></ToolButton>
        <div className="h-full w-28 bg-[#cdcdcd]" />
        <ToolButton label="向右滚动" className="ml-auto w-[27px]"><Icon w={9} h={12}><path d="M1 1l6 5-6 5" strokeWidth="2.500" /></Icon></ToolButton>
      </div>
    </div>
  );
}

function SelectFileDialog() {
  return (
    <section aria-label="选择文件" className="absolute left-[47px] top-[47px] h-[704px] w-[965px] border border-[#6a6a6a] bg-[#efefef] shadow-[0_6px_24px_rgba(0,0,0,0.45)]">
      <div className="flex h-11 items-center bg-white pl-[14px] pr-[16px] font-[Open_Sans,Noto_Sans_CJK_SC,sans-serif] text-lg text-black">
        <LogoA w={17} h={19} />
        <h2 className="ml-2 flex-1">选择文件</h2>
        <ToolButton label="关闭"><CloseX size={16} /></ToolButton>
      </div>
      <div className="flex h-[50px] items-center text-[#333]">
        <label htmlFor="look-in" className="w-[193px] pb-px pl-[67px]">查找范围(I):</label>
        <div className="relative h-[31px] w-[368px]">
          <select id="look-in" className="h-full w-full appearance-none border border-[#adadad] bg-[#e1e1e1] pl-[34px] text-[#222] outline-none">
            <option>Template</option>
          </select>
          <span className="pointer-events-none absolute left-[11px] top-[5px]"><Folder /></span>
          <Chevron className="pointer-events-none absolute right-[6px] top-3" />
        </div>
        <ToolButton label="后退" className="ml-2 w-[38px]"><Icon w={25} h={22}><path d="M1 11L12 1v6h12v8H12v6z" fill="#9a9a9a" stroke="#777" /></Icon></ToolButton>
        <ToolButton label="上一级" className="w-[38px]"><OrangeFolder><path d="M12 23v-4h3v-3l4-3 5 5h-2v5z" fill="#5038c8" stroke="none" /></OrangeFolder></ToolButton>
        <ToolButton label="搜索 Web" className="w-[38px]">
          <Icon w={25} h={24}><circle cx="11" cy="11" r="10" fill="#a9bfe8" stroke="#6a7fc0" /><path d="M6 3q6-2 10 0l-2 5-6 1zM3 12l4 2 1 5z" fill="#5a9486" stroke="none" /><circle cx="16" cy="15" r="4.500" fill="#dfeaf8" stroke="#2d3d86" strokeWidth="2" /><path d="M20 19l4 4" stroke="#2d3d86" strokeWidth="3" /></Icon>
        </ToolButton>
        <ToolButton label="删除" className="w-[38px]"><Icon w={22}><path d="M3 3l16 16M19 3L3 19" stroke="#777" strokeWidth="6" /><path d="M3 3l16 16M19 3L3 19" stroke="#a8a8a8" strokeWidth="4" /></Icon></ToolButton>
        <ToolButton label="新建文件夹" className="w-9"><OrangeFolder><path d="M16 19h9M20.500 14v9" stroke="#4534c0" strokeWidth="3.500" /></OrangeFolder></ToolButton>
        <button className="ml-1 flex items-center pb-[6px]">查看(<u>V</u>)<span className="ml-[18px] h-[2px] w-1 bg-[#222]" /></button>
        <button className="ml-4 flex items-center pb-[6px]">工具(<u>L</u>)<span className="ml-[18px] h-[2px] w-1 bg-[#222]" /></button>
      </div>
      <div className="flex text-[#333]">
        <Places />
        <div className="ml-[15px] flex-1">
          <div className="flex">
            <FileList />
            <fieldset className="ml-[10px] mt-[2px] h-[274px] w-[380px] border border-[#dcdcdc] pl-[6px]">
              <legend className="px-1 leading-6">预览</legend>
            </fieldset>
          </div>
          <div className="mt-[44px] flex h-[28px] items-center">
            <label htmlFor="file-name" className="w-[115px] pb-1 pl-1">文件名(N):</label>
            <div className="relative h-[26px] w-[512px]">
              <input id="file-name" className="h-full w-full border-2 border-[#3f6ea8] bg-white px-1 outline-none" />
              <Chevron className="pointer-events-none absolute right-[7px] top-[9px]" />
            </div>
            <button className={`ml-[6px] h-7 w-24 ${DIALOG_BUTTON}`}>打开(<u>O</u>)</button>
            <button aria-label="打开方式" className={`ml-1 flex h-7 w-[22px] items-center justify-center ${DIALOG_BUTTON}`}>
              <Icon w={12} h={7} className="text-black"><path d="M0 0h12L6 7z" fill="currentColor" stroke="none" /></Icon>
            </button>
          </div>
          <div className="mt-[15px] flex h-[30px] items-center">
            <label htmlFor="file-type" className="w-[115px] whitespace-nowrap pb-2 pl-1">文件类型(T):</label>
            <div className="relative h-[26px] w-[512px]">
              <select id="file-type" className="h-full w-full appearance-none border border-[#adadad] bg-[#e1e1e1] pl-1 text-[#222] outline-none">
                <option>样板文件 (*.dwt)</option>
              </select>
              <Chevron className="pointer-events-none absolute right-[7px] top-[9px]" />
            </div>
            <button className={`ml-[6px] h-[30px] w-[124px] ${DIALOG_BUTTON}`}>取消</button>
          </div>
        </div>
      </div>
      <Icon w={20} h={29} className="absolute left-[329px] top-[197px]">
        <path d="M1 1v22l5-5 4 9 4-2-4-8h8z" fill="#fff" stroke="#222" strokeWidth="1" />
      </Icon>
    </section>
  );
}

function OptionsDialog() {
  return (
    <section aria-label="选项" className="absolute inset-x-0 top-[122px] mx-auto h-[798px] w-[1056px] bg-[#efefef] font-[Liberation_Mono,Noto_Sans_CJK_SC,monospace] text-base text-[#333]">
      <div className="flex h-11 items-center bg-white pl-4 pr-[17px] font-[Open_Sans,Noto_Sans_CJK_SC,sans-serif] text-lg text-[#8c8c8c]">
        <LogoA w={17} h={19} />
        <h2 className="ml-2 flex-1">选项</h2>
        <ToolButton label="关闭"><CloseX size={16} /></ToolButton>
      </div>
      <p className="h-9 pl-[21px] pt-[6px] leading-6">当前配置:</p>
      <button className="ml-5 block h-[26px] w-[68px] border border-b-0 border-[#dcdcdc] bg-white">文件</button>
      <div className="ml-5 mr-[21px] h-[635px] border border-[#dcdcdc] bg-white pl-[13px] pt-3">
        <p className="leading-6">搜索路径:</p>
        <div className="mt-[6px] flex h-[510px] w-[700px] items-end border border-[#828790]">
          <span className="flex h-7 w-full items-center bg-[#efefef] pl-2">
            <Icon w={9} h={12}><path d="M8 1L2 6l6 5" strokeWidth="2.500" /></Icon>
          </span>
        </div>
      </div>
      <div className="mt-[17px] flex justify-end gap-[11px] pr-[18px]">
        {["确定", "取消", "应用(A)", "帮助(H)"].map((b) => (
          <button key={b} className={`h-[30px] w-[111px] ${DIALOG_BUTTON}`}>{b}</button>
        ))}
      </div>
      <SelectFileDialog />
    </section>
  );
}

export default function App() {
  return (
    <div className="relative min-h-screen bg-white p-2 font-[Open_Sans,Noto_Sans_CJK_SC,sans-serif]">
      <div className="flex h-[calc(100vh-16px)] min-w-0 flex-col overflow-hidden bg-[#222833] shadow-[0_0_4px_3px_#a5a5a5]">
        <TitleArea />
        <RibbonTabs />
        <Ribbon />
        <FileTabs />
        <DrawingArea />
        <LayoutTabs />
        <StatusBar />
      </div>
      <p className="absolute left-[698px] top-2 flex h-6 items-center whitespace-nowrap bg-[#555] px-[2px] font-[Liberation_Mono,Noto_Sans_CJK_SC,monospace] text-[17px] font-bold text-[#e8e8e8]">
        育设学堂(yushexuetang.com)版权所有,翻录必究.录制老师:周站长
      </p>
      <OptionsDialog />
      <ImeBar />
    </div>
  );
}
